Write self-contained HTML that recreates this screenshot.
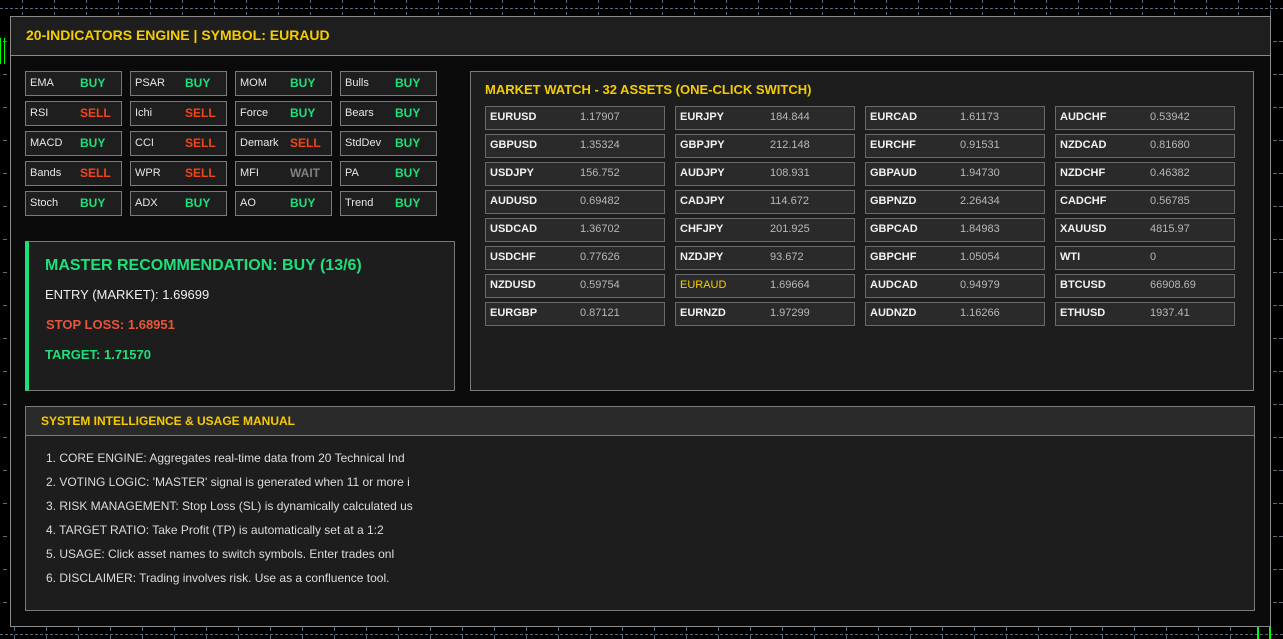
<!DOCTYPE html>
<html><head><meta charset="utf-8"><style>
*{margin:0;padding:0;box-sizing:border-box}
body{width:1283px;height:639px;background:#000;position:relative;overflow:hidden;font-family:"Liberation Sans",Arial,sans-serif}
.a{position:absolute}
.hl{position:absolute;left:0;width:1283px;border-top:1px dashed #5a6b7a}
.vl{position:absolute;top:0;height:639px;border-left:1px dashed #5a6b7a}
#topt{left:22px;top:0;width:1250px;height:16px;background:repeating-linear-gradient(90deg,transparent 0,transparent 32px);background-image:repeating-linear-gradient(90deg,#5a6b7a 0,#5a6b7a 1px,transparent 1px,transparent 32px);-webkit-mask:repeating-linear-gradient(180deg,#000 0,#000 3px,transparent 3px,transparent 6px)}
#bott{left:14px;top:627px;width:1240px;height:12px;background-image:repeating-linear-gradient(90deg,#5a6b7a 0,#5a6b7a 1px,transparent 1px,transparent 32px);-webkit-mask:repeating-linear-gradient(180deg,#000 0,#000 4px,transparent 4px,transparent 8px)}
#leftt{left:3px;top:41px;width:4px;height:580px;background-image:repeating-linear-gradient(180deg,#5a6b7a 0,#5a6b7a 1px,transparent 1px,transparent 33px)}
#rightt{left:1273px;top:41px;width:10px;height:580px;background-image:repeating-linear-gradient(180deg,#5a6b7a 0,#5a6b7a 1px,transparent 1px,transparent 33px);-webkit-mask:repeating-linear-gradient(90deg,#000 0,#000 4px,transparent 4px,transparent 6px)}
#main{left:10px;top:16px;width:1261px;height:611px;background:#0b0b0b;border:1px solid #8a8a8a}
#hdr{left:10px;top:16px;width:1261px;height:40px;background:#1e1e1e;border:1px solid #8a8a8a}
#hdr span{position:absolute;left:15px;top:10px;color:#f5cc00;font-weight:bold;font-size:14px}
.ib{position:absolute;width:97px;height:25px;background:#1e1e1e;border:1px solid #7a7a7a;font-size:11px;color:#e8e8e8;line-height:22px}
.ib i{font-style:normal;position:absolute;left:4px}
.ib b{position:absolute;left:54px;font-size:12px}
.g{color:#1ee07a}.r{color:#f0451a}.w{color:#808080}
#mr{left:25px;top:241px;width:430px;height:150px;background:#1d1d1d;border:1px solid #7a7a7a;border-left:4px solid #1ee07a}
#mw{left:470px;top:71px;width:784px;height:320px;background:#1d1d1d;border:1px solid #7a7a7a}
.ac{position:absolute;width:180px;height:24px;background:#2a2a2a;border:1px solid #6a6a6a;font-size:11px;line-height:21px}
.ac i{font-style:normal;position:absolute;left:4px;color:#f2f2f2;font-weight:bold}
.ac b{font-weight:normal;position:absolute;left:94px;color:#b8b8b8}
#man{left:25px;top:406px;width:1230px;height:205px;background:#1d1d1d;border:1px solid #7a7a7a}
#manh{left:25px;top:406px;width:1230px;height:30px;background:#2a2a2a;border:1px solid #7a7a7a}
.ml{position:absolute;left:46px;font-size:12px;color:#dcdcdc}
</style></head><body>
<div class="hl" style="top:8px"></div>
<div class="hl" style="top:634px"></div>
<div class="vl" style="left:1270px"></div>
<div class="a" id="topt"></div>
<div class="a" id="bott"></div>
<div class="a" id="leftt"></div>
<div class="a" id="rightt"></div>
<div class="a" style="left:0;top:38px;width:5px;height:26px;border-left:1px solid #0f0;border-right:1px solid #0f0"></div>
<div class="a" style="left:1257px;top:625px;width:14px;height:14px;border-left:2px solid #0f0;border-right:2px solid #0f0"></div>
<div class="a" id="main"></div>
<div class="a" id="hdr"><span>20-INDICATORS ENGINE | SYMBOL: EURAUD</span></div>

<div class="ib" style="left:25px;top:71px"><i>EMA</i><b class="g">BUY</b></div>
<div class="ib" style="left:130px;top:71px"><i>PSAR</i><b class="g">BUY</b></div>
<div class="ib" style="left:235px;top:71px"><i>MOM</i><b class="g">BUY</b></div>
<div class="ib" style="left:340px;top:71px"><i>Bulls</i><b class="g">BUY</b></div>
<div class="ib" style="left:25px;top:101px"><i>RSI</i><b class="r">SELL</b></div>
<div class="ib" style="left:130px;top:101px"><i>Ichi</i><b class="r">SELL</b></div>
<div class="ib" style="left:235px;top:101px"><i>Force</i><b class="g">BUY</b></div>
<div class="ib" style="left:340px;top:101px"><i>Bears</i><b class="g">BUY</b></div>
<div class="ib" style="left:25px;top:131px"><i>MACD</i><b class="g">BUY</b></div>
<div class="ib" style="left:130px;top:131px"><i>CCI</i><b class="r">SELL</b></div>
<div class="ib" style="left:235px;top:131px"><i>Demark</i><b class="r">SELL</b></div>
<div class="ib" style="left:340px;top:131px"><i>StdDev</i><b class="g">BUY</b></div>
<div class="ib" style="left:25px;top:161px"><i>Bands</i><b class="r">SELL</b></div>
<div class="ib" style="left:130px;top:161px"><i>WPR</i><b class="r">SELL</b></div>
<div class="ib" style="left:235px;top:161px"><i>MFI</i><b class="w">WAIT</b></div>
<div class="ib" style="left:340px;top:161px"><i>PA</i><b class="g">BUY</b></div>
<div class="ib" style="left:25px;top:191px"><i>Stoch</i><b class="g">BUY</b></div>
<div class="ib" style="left:130px;top:191px"><i>ADX</i><b class="g">BUY</b></div>
<div class="ib" style="left:235px;top:191px"><i>AO</i><b class="g">BUY</b></div>
<div class="ib" style="left:340px;top:191px"><i>Trend</i><b class="g">BUY</b></div>

<div class="a" id="mr"></div>
<div class="a g" style="left:45px;top:257px;font-size:16px;font-weight:bold">MASTER RECOMMENDATION: BUY (13/6)</div>
<div class="a" style="left:45px;top:287px;font-size:13px;color:#f0f0f0">ENTRY (MARKET): 1.69699</div>
<div class="a" style="left:46px;top:317px;font-size:13px;color:#e8553c;font-weight:bold">STOP LOSS: 1.68951</div>
<div class="a g" style="left:45px;top:347px;font-size:13px;font-weight:bold">TARGET: 1.71570</div>

<div class="a" id="mw"></div>
<div class="a" style="left:485px;top:82px;font-size:13px;font-weight:bold;color:#f5cc00">MARKET WATCH - 32 ASSETS (ONE-CLICK SWITCH)</div>

<div class="ac" style="left:485px;top:106px"><i>EURUSD</i><b>1.17907</b></div>
<div class="ac" style="left:485px;top:134px"><i>GBPUSD</i><b>1.35324</b></div>
<div class="ac" style="left:485px;top:162px"><i>USDJPY</i><b>156.752</b></div>
<div class="ac" style="left:485px;top:190px"><i>AUDUSD</i><b>0.69482</b></div>
<div class="ac" style="left:485px;top:218px"><i>USDCAD</i><b>1.36702</b></div>
<div class="ac" style="left:485px;top:246px"><i>USDCHF</i><b>0.77626</b></div>
<div class="ac" style="left:485px;top:274px"><i>NZDUSD</i><b>0.59754</b></div>
<div class="ac" style="left:485px;top:302px"><i>EURGBP</i><b>0.87121</b></div>
<div class="ac" style="left:675px;top:106px"><i>EURJPY</i><b>184.844</b></div>
<div class="ac" style="left:675px;top:134px"><i>GBPJPY</i><b>212.148</b></div>
<div class="ac" style="left:675px;top:162px"><i>AUDJPY</i><b>108.931</b></div>
<div class="ac" style="left:675px;top:190px"><i>CADJPY</i><b>114.672</b></div>
<div class="ac" style="left:675px;top:218px"><i>CHFJPY</i><b>201.925</b></div>
<div class="ac" style="left:675px;top:246px"><i>NZDJPY</i><b>93.672</b></div>
<div class="ac" style="left:675px;top:274px"><i style="color:#f5cc00;font-weight:normal">EURAUD</i><b>1.69664</b></div>
<div class="ac" style="left:675px;top:302px"><i>EURNZD</i><b>1.97299</b></div>
<div class="ac" style="left:865px;top:106px"><i>EURCAD</i><b>1.61173</b></div>
<div class="ac" style="left:865px;top:134px"><i>EURCHF</i><b>0.91531</b></div>
<div class="ac" style="left:865px;top:162px"><i>GBPAUD</i><b>1.94730</b></div>
<div class="ac" style="left:865px;top:190px"><i>GBPNZD</i><b>2.26434</b></div>
<div class="ac" style="left:865px;top:218px"><i>GBPCAD</i><b>1.84983</b></div>
<div class="ac" style="left:865px;top:246px"><i>GBPCHF</i><b>1.05054</b></div>
<div class="ac" style="left:865px;top:274px"><i>AUDCAD</i><b>0.94979</b></div>
<div class="ac" style="left:865px;top:302px"><i>AUDNZD</i><b>1.16266</b></div>
<div class="ac" style="left:1055px;top:106px"><i>AUDCHF</i><b>0.53942</b></div>
<div class="ac" style="left:1055px;top:134px"><i>NZDCAD</i><b>0.81680</b></div>
<div class="ac" style="left:1055px;top:162px"><i>NZDCHF</i><b>0.46382</b></div>
<div class="ac" style="left:1055px;top:190px"><i>CADCHF</i><b>0.56785</b></div>
<div class="ac" style="left:1055px;top:218px"><i>XAUUSD</i><b>4815.97</b></div>
<div class="ac" style="left:1055px;top:246px"><i>WTI</i><b>0</b></div>
<div class="ac" style="left:1055px;top:274px"><i>BTCUSD</i><b>66908.69</b></div>
<div class="ac" style="left:1055px;top:302px"><i>ETHUSD</i><b>1937.41</b></div>

<div class="a" id="man"></div>
<div class="a" id="manh"></div>
<div class="a" style="left:41px;top:414px;font-size:12px;font-weight:bold;color:#f5cc00">SYSTEM INTELLIGENCE &amp; USAGE MANUAL</div>
<div class="ml" style="top:451px">1. CORE ENGINE: Aggregates real-time data from 20 Technical Ind</div>
<div class="ml" style="top:475px">2. VOTING LOGIC: 'MASTER' signal is generated when 11 or more i</div>
<div class="ml" style="top:499px">3. RISK MANAGEMENT: Stop Loss (SL) is dynamically calculated us</div>
<div class="ml" style="top:523px">4. TARGET RATIO: Take Profit (TP) is automatically set at a 1:2</div>
<div class="ml" style="top:547px">5. USAGE: Click asset names to switch symbols. Enter trades onl</div>
<div class="ml" style="top:571px">6. DISCLAIMER: Trading involves risk. Use as a confluence tool.</div>
</body></html>
